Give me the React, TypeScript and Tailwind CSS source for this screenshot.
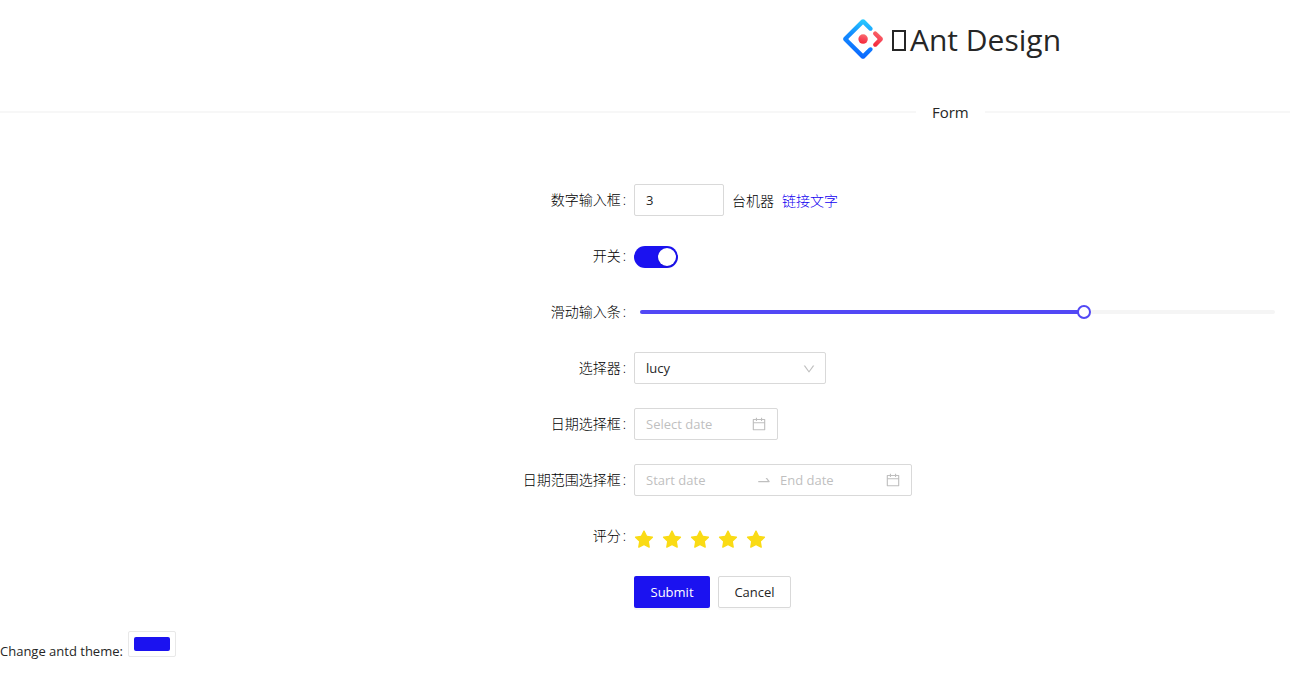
import { useState, type ReactNode } from "react";
import {
  AiFillStar,
  AiOutlineCalendar,
  AiOutlineDown,
  AiOutlineSwapRight,
} from "react-icons/ai";

function Logo() {
  return (
    <svg viewBox="0 0 200 200" className="size-10 shrink-0" aria-hidden="true">
      <defs>
        <linearGradient id="blueInner" x1="69.64%" y1="0%" x2="54.04%" y2="108.46%">
          <stop offset="0%" stopColor="#29CDFF" />
          <stop offset="37.86%" stopColor="#148EFF" />
          <stop offset="100%" stopColor="#0A60FF" />
        </linearGradient>
        <linearGradient id="redArrow" x1="69.69%" y1="-12.97%" x2="16.72%" y2="117.39%">
          <stop offset="0%" stopColor="#FA816E" />
          <stop offset="41.47%" stopColor="#F74A5C" />
          <stop offset="100%" stopColor="#F51D2C" />
        </linearGradient>
        <linearGradient id="redDot" x1="68.13%" y1="-35.69%" x2="30.44%" y2="114.94%">
          <stop offset="0%" stopColor="#FA8E7D" />
          <stop offset="51.26%" stopColor="#F74A5C" />
          <stop offset="100%" stopColor="#F51D2C" />
        </linearGradient>
      </defs>
      <path
        fill="url(#blueInner)"
        d="M91.588 4.177L4.18 91.513c-4.7 4.695-4.7 12.279 0 16.974l87.408 87.336c4.7 4.696 12.29 4.696 16.989 0l36.648-36.618c4.209-4.205 4.209-11.023 0-15.228-4.208-4.205-11.031-4.205-15.24 0l-27.783 27.76c-1.17 1.169-2.945 1.169-4.114 0L28.286 101.993c-1.17-1.168-1.17-2.942 0-4.11l69.802-69.745c1.169-1.169 2.944-1.169 4.114 0l27.783 27.76c4.209 4.205 11.032 4.205 15.24 0 4.209-4.205 4.209-11.022 0-15.227L108.58 4.056c-4.719-4.594-12.312-4.557-16.992.12z"
      />
      <path
        fill="url(#redArrow)"
        d="M153.686 135.855c4.208 4.205 11.031 4.205 15.24 0l27.034-27.012c4.7-4.696 4.7-12.28 0-16.974l-27.27-27.15c-4.218-4.2-11.043-4.195-15.254.013-4.209 4.205-4.209 11.022 0 15.227l18.418 18.403c1.17 1.169 1.17 2.943 0 4.111l-18.168 18.154c-4.209 4.205-4.209 11.023 0 15.228z"
      />
      <ellipse fill="url(#redDot)" cx="100.519" cy="100.437" rx="23.6" ry="23.581" />
    </svg>
  );
}

type RowProps = { label: string; htmlFor?: string; children: ReactNode };

function Row({ label, htmlFor, children }: RowProps) {
  return (
    <div className="mb-6 flex min-h-8 items-center">
      <label
        htmlFor={htmlFor}
        className="w-[49.15%] shrink-0 pr-2 text-right text-sm leading-[22px] font-light text-black"
      >
        {label}
        <span className="ml-0.5">:</span>
      </label>
      {children}
    </div>
  );
}

export default function App() {
  const [count, setCount] = useState("3");
  const [enabled, setEnabled] = useState(true);
  const [level, setLevel] = useState(70);
  const [rate, setRate] = useState(5);
  const [theme, setTheme] = useState("#1b12f0");

  return (
    <main className="min-h-screen overflow-x-hidden bg-white font-['Open_Sans','Noto_Sans_CJK_SC',sans-serif] text-[13px] leading-[22px] text-[#262626]">
      <header className="flex items-center gap-2 pt-4 pl-[65.35%]">
        <Logo />
        <h1 className="flex items-center pt-0.5 text-[30px] leading-[44px] whitespace-nowrap">
          <span className="mr-1 ml-px h-[21px] w-3.5 border-2 border-[#262626]" aria-hidden="true" />
          Ant Design
        </h1>
      </header>

      <div className="mt-[38px] mb-[60px] flex items-center">
        <div className="h-0.5 grow-3 basis-0 bg-[#f7f7f7]" />
        <h2 className="px-4 text-[15px] leading-6 font-medium">Form</h2>
        <div className="h-0.5 grow basis-0 bg-[#f7f7f7]" />
      </div>

      <form onSubmit={(e) => e.preventDefault()}>
        <Row label="数字输入框" htmlFor="count">
          <input
            id="count"
            inputMode="numeric"
            value={count}
            onChange={(e) => setCount(e.target.value)}
            className="h-8 w-[90px] rounded-xs border border-[#d9d9d9] px-[11px] outline-none"
          />
          <span className="mt-0.5 ml-2 text-sm font-light text-black">台机器</span>
          <a href="#machines" className="mt-0.5 ml-2 text-sm font-light text-[#1200f0]">
            链接文字
          </a>
        </Row>

        <Row label="开关" htmlFor="enabled">
          <input
            id="enabled"
            type="checkbox"
            role="switch"
            checked={enabled}
            onChange={(e) => setEnabled(e.target.checked)}
            className="mt-0.5 flex h-[22px] w-11 appearance-none items-center rounded-full bg-[#bfbfbf] px-0.5 before:size-[18px] before:rounded-full before:bg-white before:shadow-sm checked:justify-end checked:bg-[#1b12f0]"
          />
        </Row>

        <Row label="滑动输入条" htmlFor="level">
          <div className="relative mr-[15px] ml-1.5 h-1 flex-1 rounded-xs bg-[#f5f5f5]">
            <div className="h-1 rounded-xs bg-[#5248f5]" style={{ width: `${level}%` }} />
            <input
              id="level"
              type="range"
              value={level}
              onChange={(e) => setLevel(Number(e.target.value))}
              className="absolute -top-[5px] right-[-7px] left-[-8px] h-3.5 appearance-none bg-transparent [&::-webkit-slider-thumb]:size-3.5 [&::-webkit-slider-thumb]:appearance-none [&::-webkit-slider-thumb]:rounded-full [&::-webkit-slider-thumb]:border-2 [&::-webkit-slider-thumb]:border-solid [&::-webkit-slider-thumb]:border-[#5248f5] [&::-webkit-slider-thumb]:bg-white"
            />
          </div>
        </Row>

        <Row label="选择器" htmlFor="person">
          <div className="relative w-48">
            <select
              id="person"
              className="h-8 w-full appearance-none rounded-xs border border-[#d9d9d9] bg-white px-[11px] outline-none"
            >
              <option>lucy</option>
              <option>jack</option>
            </select>
            <AiOutlineDown className="pointer-events-none absolute top-2.5 right-2.5 size-3.5 text-[#bfbfbf]" />
          </div>
        </Row>

        <Row label="日期选择框" htmlFor="date">
          <div className="flex h-8 w-36 items-center rounded-xs border border-[#d9d9d9] pr-2.5 pl-[11px] text-[#bfbfbf]">
            <input
              id="date"
              placeholder="Select date"
              className="w-full min-w-0 outline-none placeholder:text-[#bfbfbf]"
            />
            <AiOutlineCalendar className="size-4 shrink-0" />
          </div>
        </Row>

        <Row label="日期范围选择框" htmlFor="start">
          <div className="flex h-8 w-[278px] items-center rounded-xs border border-[#d9d9d9] pr-2.5 pl-[11px] text-[#bfbfbf]">
            <input
              id="start"
              placeholder="Start date"
              className="w-[110px] outline-none placeholder:text-[#bfbfbf]"
            />
            <AiOutlineSwapRight className="mr-2 size-4 shrink-0" />
            <input
              aria-label="End date"
              placeholder="End date"
              className="min-w-0 flex-1 outline-none placeholder:text-[#bfbfbf]"
            />
            <AiOutlineCalendar className="size-4 shrink-0" />
          </div>
        </Row>

        <Row label="评分">
          <div className="-ml-px flex h-8 items-center gap-1.5 pt-2" role="group" aria-label="评分">
            {[1, 2, 3, 4, 5].map((n) => (
              <button
                key={n}
                type="button"
                aria-label={`${n}`}
                onClick={() => setRate(n)}
                className={n <= rate ? "text-[#fadb14]" : "text-[#f0f0f0]"}
              >
                <AiFillStar className="size-[22px]" />
              </button>
            ))}
          </div>
        </Row>

        <div className="flex gap-2 pl-[49.15%]">
          <button
            type="submit"
            className="h-8 w-[76px] rounded-xs bg-[#1b12f0] font-medium text-white shadow-[0_2px_0_rgba(0,0,0,0.04)]"
          >
            Submit
          </button>
          <button
            type="button"
            className="h-8 w-[73px] rounded-xs border border-[#d9d9d9] shadow-[0_2px_0_rgba(0,0,0,0.02)]"
          >
            Cancel
          </button>
        </div>
      </form>

      <footer className="mt-[23px] flex items-start gap-[5px]">
        <label htmlFor="theme" className="pt-[9px]">
          Change antd theme:
        </label>
        <input
          id="theme"
          type="color"
          value={theme}
          onChange={(e) => setTheme(e.target.value)}
          className="h-[26px] w-12 appearance-none rounded-xs border border-[#e8e8e8] bg-white p-[5px] [&::-webkit-color-swatch]:rounded-xs [&::-webkit-color-swatch]:border-0 [&::-webkit-color-swatch-wrapper]:p-0"
        />
      </footer>
    </main>
  );
}
